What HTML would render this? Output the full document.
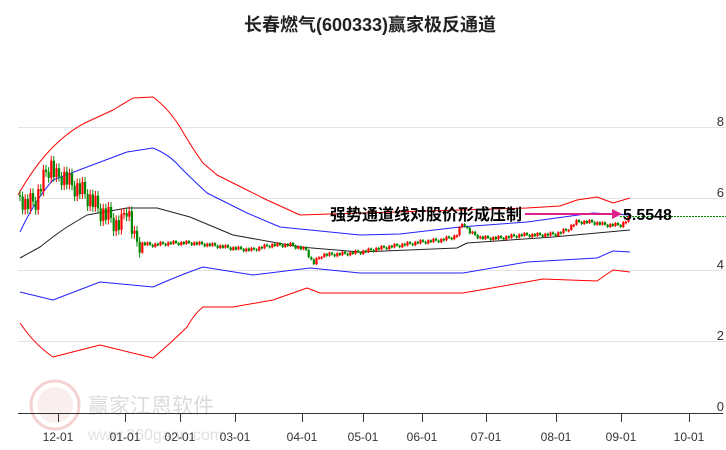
<!DOCTYPE html><html><head><meta charset="utf-8"><style>
body{margin:0;background:#fff;width:726px;height:450px;overflow:hidden;font-family:"Liberation Sans","Noto Sans CJK SC",sans-serif}
svg{position:absolute;left:0;top:0}
</style></head><body>
<svg width="726" height="450" viewBox="0 0 726 450" xmlns="http://www.w3.org/2000/svg">
<g stroke="#e3e3e3" stroke-width="1">
<line x1="18" y1="127.5" x2="726" y2="127.5"/><line x1="18" y1="198.5" x2="726" y2="198.5"/>
<line x1="18" y1="270.5" x2="726" y2="270.5"/><line x1="18" y1="341.5" x2="726" y2="341.5"/>
</g>
<g font-size="13" fill="#333" text-anchor="end">
<text x="724" y="126">8</text><text x="724" y="197">6</text><text x="724" y="269">4</text><text x="724" y="340">2</text><text x="724" y="411">0</text>
</g>
<g opacity="0.35">
<circle cx="55" cy="405" r="24" fill="none" stroke="#e08080" stroke-width="3"/>
<circle cx="55" cy="405" r="18" fill="#f0b0b0" opacity="0.6"/>
<text x="88" y="413" font-size="21" fill="#999">赢家江恩软件</text>
<text x="88" y="440" font-size="16" fill="#aaa">www.360gann.com</text>
</g>
<text x="370" y="31" font-size="18" font-weight="bold" fill="#222" text-anchor="middle">长春燃气(600333)赢家极反通道</text>
<g fill="none" stroke-width="1" stroke-linejoin="round">
<path stroke="#f00" d="M18,195 Q35,165 53,147 Q70,130 87,122 L113,110 L133,98 L153,97 Q168,108 180,127 Q192,148 203,163 L217,175 L247,190 L267,200 L300,215 L360,213 L460,210 L527,208 L560,206 L577,200 L597,197 L613,203 L630,198"/>
<path stroke="#22f" d="M20,232 Q35,200 53,180 L87,167 L127,152 L153,148 Q170,155 180,167 Q195,182 207,193 L247,213 L280,227 L360,235 L400,234 L460,227 L527,222 L593,213 L630,215"/>
<path stroke="#222" d="M20,258 L40,247 Q55,235 67,227 L87,215 L127,208 L157,208 L190,217 L233,235 L300,247 L360,252 L457,248 L467,243 L553,237 L630,230"/>
<path stroke="#22f" d="M20,292 L53,300 L100,282 L153,287 Q180,275 203,267 L253,275 L310,268 L360,273 L463,273 L527,262 L597,258 L613,251 L630,252"/>
<path stroke="#f00" d="M20,323 Q35,345 53,357 L100,345 L153,358 Q172,342 187,327 Q195,313 203,307 L233,307 L273,300 L307,288 L320,293 L360,293 L463,293 L543,279 L597,281 L613,270 L630,272"/>
</g>
<g id="c"></g>
<line x1="620" y1="216.5" x2="726" y2="216.5" stroke="#080" stroke-dasharray="2,1"/>
<text x="330" y="220" font-size="16" font-weight="bold" fill="#000">强势通道线对股价形成压制</text>
<line x1="525" y1="214" x2="614" y2="214" stroke="#e0208a" stroke-width="2"/>
<path d="M612,209 L622,214 L612,219 Z" fill="#e0208a"/>
<text x="623" y="220" font-size="16" font-weight="bold" fill="#000">5.5548</text>
<line x1="18" y1="413.5" x2="723" y2="413.5" stroke="#333"/>
<g stroke="#333"><line x1="58.5" y1="413" x2="58.5" y2="422"/><line x1="125.5" y1="413" x2="125.5" y2="422"/><line x1="180.5" y1="413" x2="180.5" y2="422"/><line x1="235.5" y1="413" x2="235.5" y2="422"/><line x1="302.5" y1="413" x2="302.5" y2="422"/><line x1="363.5" y1="413" x2="363.5" y2="422"/><line x1="422.5" y1="413" x2="422.5" y2="422"/><line x1="486.5" y1="413" x2="486.5" y2="422"/><line x1="556.5" y1="413" x2="556.5" y2="422"/><line x1="621.5" y1="413" x2="621.5" y2="422"/><line x1="689.5" y1="413" x2="689.5" y2="422"/></g>
<g font-size="12" fill="#333" text-anchor="middle">
<text x="58" y="441">12-01</text><text x="125" y="441">01-01</text><text x="180" y="441">02-01</text><text x="235" y="441">03-01</text><text x="302" y="441">04-01</text><text x="363" y="441">05-01</text><text x="422" y="441">06-01</text><text x="486" y="441">07-01</text><text x="556" y="441">08-01</text><text x="621" y="441">09-01</text><text x="689" y="441">10-01</text>
</g>
</svg>
<script>
var P=[[18,195],[25,205],[35,200],[45,172],[50,165],[55,178],[62,175],[70,185],[80,190],[90,200],[100,212],[110,218],[115,225],[120,225],[125,205],[128,215],[133,240],[138,243],[150,245],[170,243],[190,243],[210,245],[230,248],[250,250],[270,245],[290,245],[305,250],[312,264],[320,255],[340,254],[360,252],[380,248],[400,245],[420,242],[440,240],[455,236],[462,222],[468,232],[480,238],[500,238],[520,235],[540,235],[555,234],[565,230],[575,222],[590,222],[605,225],[620,225],[628,218]];
function f(x){for(var i=1;i<P.length;i++){if(x<=P[i][0]){var a=P[i-1],b=P[i];return a[1]+(b[1]-a[1])*(x-a[0])/(b[0]-a[0]);}}return P[P.length-1][1];}
var s='',prev=f(18),k=0;
for(var x=19;x<=628;x+=2.6){k++;var y=f(x);var vol=x<140?12:2.5;var o=prev,c=y+((k*7)%5-2)*vol*0.4;var up=c<o;var col=up?'#f00':'#080';var t=Math.min(o,c),h=Math.max(1.5,Math.abs(o-c));
s+='<line x1="'+(x+1)+'" x2="'+(x+1)+'" y1="'+(t-vol*0.4)+'" y2="'+(t+h+vol*0.4)+'" stroke="'+col+'"/><rect x="'+x+'" y="'+t+'" width="2.2" height="'+h+'" fill="'+col+'"/>';prev=c;}
document.getElementById('c').innerHTML=s;
</script>
</body></html>
